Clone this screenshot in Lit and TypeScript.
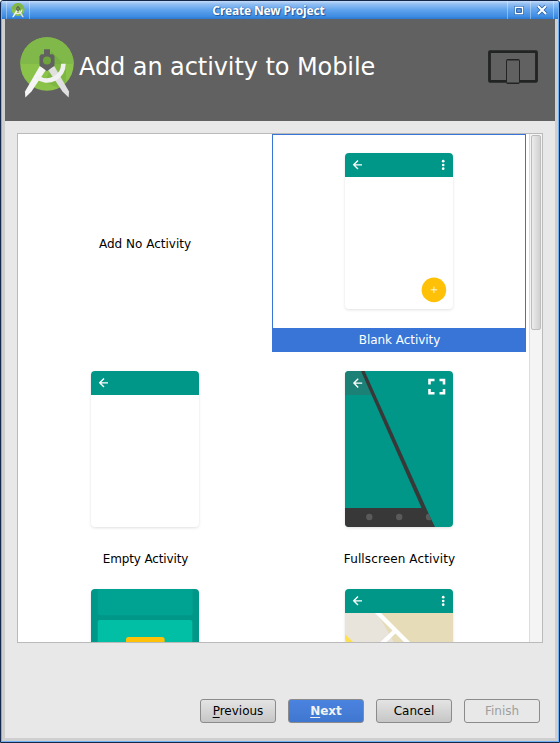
import { LitElement, html, css, svg, nothing } from "lit";
import { customElement, property, state } from "lit/decorators.js";
import { classMap } from "lit/directives/class-map.js";
import { styleMap } from "lit/directives/style-map.js";

type Preview = "none" | "blank" | "empty" | "fullscreen" | "ads" | "maps";

const studioLogo = svg`
  <circle cx="27" cy="27" r="26.700" fill="#8bc34a"/>
  <path d="M.3 27a26.700 26.700 0 0 1 53.400 0z" fill="#80b849"/>
  <path d="M31 14L46 29V45A26.700 26.700 0 0 1 38 51L25 45L31 30z" fill="#558b2f" opacity=".22"/>
  <path d="M27.500 32L34.200 29L49 54.500L48.700 60.500L42.500 54.500z" fill="#e0e0e0"/>
  <path d="M26.500 32L19.800 29L5 54.500L5.300 60.500L11.500 54.500z" fill="#f5f5f5"/>
  <path d="M17 40A16.400 16.400 0 0 0 43.400 26.700" fill="none" stroke="#f1f1f1" stroke-width="4.700"/>
  <path d="M24 12.300h6v5h3l1.500 2v9.400L31.300 31 27 34.200 22.700 31l-3.200-2.300v-9.400l1.500-2h3z" fill="#616161"/>
  <circle cx="27" cy="23.600" r="4" fill="#6fa43c"/>
`;

const backArrow = svg`<path d="M17 11.800H8.500M13 7.500L8.700 11.800l4.300 4.300" fill="none" stroke="#fff" stroke-width="1.350"/>`;
const overflowDots = svg`<g fill="#fff"><circle cx="98.200" cy="8.200" r="1.350"/><circle cx="98.200" cy="12" r="1.350"/><circle cx="98.200" cy="15.700" r="1.350"/></g>`;

@customElement("activity-preview")
export class ActivityPreview extends LitElement {
  @property() kind: Preview = "blank";

  static styles = css`
    :host { display: block; }
    .sheet {
      display: block; width: 108px; height: 156px; border-radius: 4px;
      background: #fff; box-shadow: 0 1px 3px rgba(0, 0, 0, 0.12);
    }
  `;

  private art() {
    const bar = svg`<path d="M0 0h108v24H0z" fill="#009688"/>`;
    switch (this.kind) {
      case "blank":
        return svg`${bar}${backArrow}${overflowDots}
          <circle cx="88.900" cy="136.900" r="12.300" fill="#ffc107"/>
          <path d="M85.700 136.800h6.400M88.900 133.600v6.400" stroke="#fff" stroke-opacity=".85" stroke-width="1"/>`;
      case "empty":
        return svg`${bar}${backArrow}`;
      case "fullscreen":
        return svg`<path d="M0 0h108v156H0z" fill="#009688"/>
          <path d="M0 0h17l11 24H0z" fill="#1b8177"/>
          <path d="M0 137h80l10 19H0z" fill="#383838"/>
          <path d="M16 0h3.600L89.600 156H85z" fill="#383838"/>
          <g fill="#5a5a5a"><circle cx="24.300" cy="146" r="3.200"/><circle cx="54.200" cy="146" r="3.200"/>
          <path d="M84 142.800a3.200 3.200 0 0 0 0 6.400h2.300z"/></g>
          <g transform="translate(.2 .3)">${backArrow}</g>
          <path d="M84.500 13.500V9h5M94.500 9h4.500v4.500M99 18v4.300h-4.500M89.500 22.300h-5V18" fill="none" stroke="#fff" stroke-width="2.600"/>`;
      case "ads":
        return svg`<path d="M0 0h108v156H0z" fill="#009688"/>
          <path d="M6.700 0h95v24.300q0 2-2 2h-91q-2 0-2-2z" fill="#00a291"/>
          <rect x="6.700" y="31" width="94.600" height="110" rx="2" fill="#00bfa5"/>
          <rect x="35" y="48" width="38.600" height="40" rx="2.500" fill="#ffc107"/>`;
      case "maps":
        return svg`<path d="M0 24h108v132H0z" fill="#e8e4dc"/>
          <path d="M32 24h76v132z" fill="#e6dcb8"/>
          <path d="M31 22L67 58M0 90L50 42" stroke="#fff" stroke-width="4.300" fill="none"/>
          <path d="M-3 45L17 65" stroke="#ffe14d" stroke-width="4.300"/>
          ${bar}${backArrow}${overflowDots}`;
      default:
        return nothing;
    }
  }

  render() {
    return html`<svg class="sheet" viewBox="0 0 108 156">${this.art()}</svg>`;
  }
}

@customElement("activity-tile")
export class ActivityTile extends LitElement {
  @property() label = "";
  @property() kind: Preview = "none";
  @property({ type: Number }) tracking = 0;
  @property({ type: Boolean }) selected = false;

  static styles = css`
    :host { display: block; height: 218px; }
    .tile {
      box-sizing: border-box; height: 100%; display: flex; flex-direction: column;
      align-items: center; justify-content: space-between;
      border: 1px solid transparent; padding-top: 18px; color: #000;
    }
    .bare { justify-content: center; padding-top: 0; }
    .selected { border-color: #3875d7; }
    .caption { box-sizing: border-box; width: 100%; height: 23px; padding-left: 1px; line-height: 25px; text-align: center; }
    .bare .caption { padding-left: 0; }
    .low { line-height: 27px; }
    .selected .caption { background: #3875d7; color: #fff; }
  `;

  render() {
    const bare = this.kind === "none";
    return html`<div class=${classMap({ tile: true, bare, selected: this.selected })}>
      ${bare ? nothing : html`<activity-preview .kind=${this.kind}></activity-preview>`}
      <div class=${classMap({ caption: true, low: !bare && !this.selected })}
        style=${styleMap({ letterSpacing: `${this.tracking}px` })}>${this.label}</div>
    </div>`;
  }
}

@customElement("app-root")
export class AppRoot extends LitElement {
  @state() private chosen: Preview = "blank";

  private activities: { label: string; kind: Preview; tracking: number }[] = [
    { label: "Add No Activity", kind: "none", tracking: 0 },
    { label: "Blank Activity", kind: "blank", tracking: -0.05 },
    { label: "Empty Activity", kind: "empty", tracking: -0.14 },
    { label: "Fullscreen Activity", kind: "fullscreen", tracking: 0.12 },
    { label: "", kind: "ads", tracking: 0 },
    { label: "", kind: "maps", tracking: 0 },
  ];

  static styles = css`
    :host { display: block; font: 12px "DejaVu Sans", sans-serif; color: #000; }
    .window {
      box-sizing: border-box; width: 560px; height: 743px; display: flex; flex-direction: column;
      border: 1px solid #14284b; border-radius: 3px 3px 0 0; background: #d0cfcf; overflow: hidden;
    }
    .titlebar {
      box-sizing: border-box; height: 18px; flex: none; display: flex; align-items: stretch;
      background: linear-gradient(#c4dcf8 0, #93bff2 3px, #5fa3ec 9px, #3c8ae2 16px, #2f7dd5 17px);
      border-left: 1px solid #73b1f5; border-right: 1px solid #73b1f5;
    }
    .slot { box-sizing: border-box; width: 24px; display: flex; align-items: center; justify-content: center;
      border-left: 1px solid rgba(255, 255, 255, 0.35); }
    .app { margin-left: 4px; border-right: 1px solid rgba(255, 255, 255, 0.35); }
    .ctl { width: 23px; }
    .last { margin-right: 4px; border-right: 1px solid rgba(255, 255, 255, 0.35); width: 24px; }
    .caption { flex: 1; text-align: center; color: #fff; letter-spacing: -0.15px;
      font: bold 12px/19px "Noto Sans", sans-serif; text-shadow: 0 0 1px #1b4f91, 1px 1px 1px #1f5ba6; }
    .frame { flex: 1; min-height: 0; display: flex; padding: 0 3px 3px;
      border: solid #73b1f5; border-width: 0 1px 1px; }
    .body { flex: 1; display: flex; flex-direction: column; background: #e8e8e8; }
    .header { box-sizing: border-box; height: 102px; flex: none; display: flex; align-items: flex-start;
      padding: 18px 17px 0 15px; background: #616161; color: #fff; }
    .heading { flex: 1; font-size: 24px; line-height: 28px; letter-spacing: -0.08px; margin: 16px 0 0 5px; white-space: nowrap; }
    .devices { margin-top: 13px; }
    .logo, .mini, .devices, .glyph { display: block; }
    .list { box-sizing: border-box; height: 510px; flex: none; margin: 12px 12px 0; display: flex;
      border: 1px solid #bababa; background: #fff; overflow: hidden; }
    .grid { display: grid; grid-template-columns: 254px 254px; width: 508px; align-content: start; margin-right: 3px; }
    .track { box-sizing: border-box; flex: 1; border-left: 1px solid #dcdcdc; background: #f4f4f4; padding: 1px 1px 0; }
    .thumb { box-sizing: border-box; height: 195px; border: 1px solid #bdbdbd; border-radius: 2px;
      background: linear-gradient(90deg, #ececec, #d0d0d0); }
    .actions { display: flex; justify-content: flex-end; gap: 12px; padding: 56px 15px 0 0; }
    .btn { box-sizing: border-box; width: 76px; height: 24px; padding: 0; border: 1px solid #8b8b8b; border-radius: 3px;
      font: 12px/22px "DejaVu Sans", sans-serif; color: #000; background: linear-gradient(#e4e4e4, #c6c6c6); }
    .primary { font-weight: bold; color: #f2f2f2; background: linear-gradient(#4a83e0, #4077cf); }
    .off { color: #9e9e9e; background: #e8e8e8; }
    .key { text-decoration: underline; text-underline-offset: 2px; }
  `;

  render() {
    return html`
      <div class="window">
        <div class="titlebar">
          <div class="slot app"><svg class="mini" width="14" height="15" viewBox="0 0 54 62">${studioLogo}</svg></div>
          <div class="caption">Create New Project</div>
          <div class="slot ctl">
            <svg class="glyph" width="12" height="12" viewBox="0 0 12 12">
              <path d="M1 2h10v9H1z" fill="#24599f" fill-opacity=".6"/>
              <path d="M2.500 3.500h7v6h-7z" fill="#5c9de6" stroke="#fff" stroke-width="1.300"/>
              <path d="M3.700 4.700h4.600v3.600H3.700z" fill="none" stroke="#24599f" stroke-width="1"/>
            </svg>
          </div>
          <div class="slot last">
            <svg class="glyph" width="12" height="12" viewBox="0 0 12 12">
              <path d="M2 2l8 8M10 2l-8 8" stroke="#2a63ad" stroke-width="3.800"/>
              <path d="M2 2l8 8M10 2l-8 8" stroke="#fff" stroke-width="2.100"/>
            </svg>
          </div>
        </div>
        <div class="frame">
          <div class="body">
            <div class="header">
              <svg class="logo" width="54" height="62" viewBox="0 0 54 62">${studioLogo}</svg>
              <div class="heading">Add an activity to Mobile</div>
              <svg class="devices" width="50" height="35" viewBox="0 0 50 35">
                <rect x="1.500" y="1.700" width="47" height="29.600" rx=".5" fill="#616161" stroke="#222423" stroke-width="2.800"/>
                <rect x="18.500" y="9.500" width="13" height="24" rx="1" fill="#616161" stroke="#222423"/>
                <path d="M19 9.700h12M19 33.200h12" stroke="#222423" stroke-width="1.600"/>
              </svg>
            </div>
            <div class="list">
              <div class="grid">
                ${this.activities.map(
                  (a) => html`<activity-tile .label=${a.label} .kind=${a.kind} .tracking=${a.tracking}
                    .selected=${a.kind === this.chosen} @click=${() => (this.chosen = a.kind)}></activity-tile>`
                )}
              </div>
              <div class="track"><div class="thumb"></div></div>
            </div>
            <div class="actions">
              <button class="btn"><span class="key">P</span>revious</button>
              <button class="btn primary"><span class="key">N</span>ext</button>
              <button class="btn">Cancel</button>
              <button class="btn off" disabled>Finish</button>
            </div>
          </div>
        </div>
      </div>
    `;
  }
}
